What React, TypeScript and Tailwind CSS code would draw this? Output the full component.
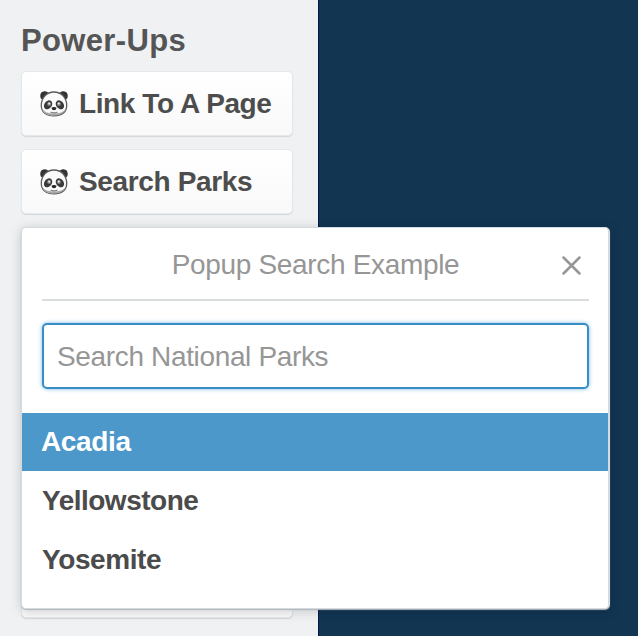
import React from "react";

function Panda() {
  return (
    <svg className="mt-px h-[28px] w-[28px] shrink-0" viewBox="0 0 28 28" fill="none">
      <path d="M0.8 8.6C-0.6 4.8 0.8 1.3 4.4 1.2C6.6 1.1 8.2 2.2 9 3.6L3 10Z" fill="#333" />
      <path d="M27.2 8.6C28.6 4.8 27.2 1.3 23.6 1.2C21.4 1.1 19.8 2.2 19 3.6L25 10Z" fill="#333" />
      <path d="M14 2C6.6 2 1.3 7.8 1.3 15.4C1.3 22.4 6.6 25.9 14 25.9S26.7 22.4 26.7 15.4C26.7 7.8 21.4 2 14 2Z" fill="#fafafa" stroke="#5b5b5b" strokeWidth="1.3" />
      <path d="M2.2 19C4.3 23.8 8.5 25.5 14 25.5S23.7 23.8 25.8 19C23.5 22.2 19.5 23.6 14 23.6S4.5 22.2 2.2 19Z" fill="#a8a8a8" />
      <ellipse cx="8.1" cy="14.8" rx="3.7" ry="4.9" transform="rotate(38 8.1 14.8)" fill="#3a3a3a" />
      <ellipse cx="19.9" cy="14.8" rx="3.7" ry="4.9" transform="rotate(-38 19.9 14.8)" fill="#3a3a3a" />
      <circle cx="9.1" cy="14" r="2" fill="#858585" />
      <circle cx="18.9" cy="14" r="2" fill="#858585" />
      <circle cx="9.2" cy="13.6" r="1" fill="#eee" />
      <circle cx="18.8" cy="13.6" r="1" fill="#eee" />
      <path d="M11.4 17.8Q14 16.4 16.6 17.8Q16 20.3 14 20.3Q12 20.3 11.4 17.8Z" fill="#252525" />
      <path d="M11 22.3Q14 23.4 17 22.3" stroke="#777" strokeWidth="1.1" strokeLinecap="round" />
    </svg>
  );
}

function PowerUpButton({ label, spacing }: { label: string; spacing: string }) {
  return (
    <button className="flex h-[65px] w-[272px] shrink-0 items-center rounded-[5px] border border-[#e5e8ea] bg-linear-to-b from-white to-[#f9f9f9] pl-[18px] shadow-[0_1px_1px_#d3d7da]">
      <Panda />
      <span className={`mt-px ml-[11px] text-[28px] leading-[32px] font-bold whitespace-nowrap text-[#4d4d4d] ${spacing}`}>
        {label}
      </span>
    </button>
  );
}

function SearchPopup() {
  return (
    <section className="absolute top-[227px] left-[21px] flex h-[382px] w-[589px] flex-col rounded-[5px] border border-r-2 border-[#d5dadd] bg-white shadow-[0_1px_1px_#aeb9c0,0_2px_12px_rgba(0,0,0,0.18)]">
      <header className="relative mr-[19px] ml-[20px] flex h-[73px] shrink-0 items-center justify-center border-b-2 border-[#dadddd] pt-[2px]">
        <h2 className="text-[28px] leading-[34px] tracking-[-0.33px] text-[#969696]">Popup Search Example</h2>
        <button className="absolute top-[28px] right-[8px]" aria-label="Close">
          <svg className="h-[19px] w-[19px]" viewBox="0 0 19 19" stroke="#969696" strokeWidth="2.5" strokeLinecap="round">
            <path d="M1.5 1.5L17.5 17.5M17.5 1.5L1.5 17.5" />
          </svg>
        </button>
      </header>
      <div className="mt-[22px] mr-[19px] ml-[20px] flex h-[66px] shrink-0 rounded-[5px] border-2 border-[#388fc5] bg-white shadow-[0_0_4px_#7fbce5]">
        <input
          className="w-full bg-transparent px-[13px] pt-px text-[28px] tracking-[-0.35px] text-[#4d4d4d] outline-none placeholder:text-[#969696]"
          placeholder="Search National Parks"
        />
      </div>
      <ul className="mt-[24px] text-[28px] leading-[58px] font-bold text-[#4b4b4b]">
        <li className="h-[58px] bg-[#4c98cb] pl-[19px] tracking-[-0.35px] text-white">Acadia</li>
        <li className="h-[59px] pt-px pl-[20px] tracking-[-0.5px]">Yellowstone</li>
        <li className="h-[58px] pt-px pl-[20px] tracking-[-0.4px]">Yosemite</li>
      </ul>
    </section>
  );
}

export default function App() {
  return (
    <main className="relative flex h-[636px] w-[638px] overflow-hidden bg-[#123552] font-['Liberation_Sans',Arial,sans-serif]">
      <aside className="flex w-[318px] shrink-0 flex-col bg-[#eff1f3] pl-[21px] shadow-[1px_0_0_#00194a]">
        <h1 className="mt-[23px] mb-[12px] h-[36px] text-[31px] leading-[36px] font-bold tracking-[0.35px] text-[#555]">Power-Ups</h1>
        <PowerUpButton label="Link To A Page" spacing="tracking-[-0.4px]" />
        <div className="h-[13px] shrink-0" />
        <PowerUpButton label="Search Parks" spacing="tracking-[-0.35px]" />
        <div className="mt-[340px] h-[64px] w-[272px] shrink-0 rounded-[5px] border border-[#e5e8ea] bg-[#f9f9f9] shadow-[0_1px_1px_#d3d7da]" />
      </aside>
      <SearchPopup />
    </main>
  );
}
